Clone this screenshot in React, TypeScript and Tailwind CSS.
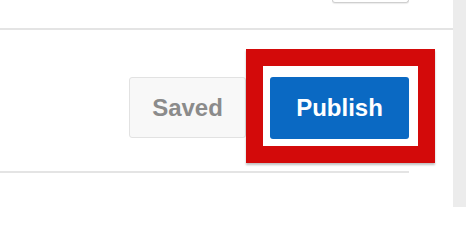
const App: React.FC = () => {
  return (
    <div
      className="relative flex w-[466px] h-[207px] bg-white overflow-hidden"
      style={{ fontFamily: '"Liberation Sans", Arial, sans-serif' }}
    >
      <div className="flex flex-col w-[453px]">
        {/* bottom edge of a control that sits above the crop */}
        <div className="h-[28px] pl-[332px]">
          <div className="w-[77px] h-[3px] border-x border-b border-[#cfcfcf] rounded-b-[3px] shadow-[0_1px_1px_rgba(0,0,0,0.08)]" />
        </div>
        <div className="h-[2px] bg-[#e4e4e4]" />

        <div className="w-[409px] flex flex-col">
          <div className="h-[47px]" />
          <div className="flex justify-end items-start gap-[24px]">
            <button
              type="button"
              className="w-[117px] h-[61px] rounded-[3px] border border-[#e2e2e2] bg-[#f8f8f8] text-[24px] font-bold text-[#8b8b8b]"
            >
              Saved
            </button>
            <button
              type="button"
              className="w-[139px] h-[62px] rounded-[3px] bg-[#0a69c3] text-[24px] font-bold text-white"
            >
              Publish
            </button>
          </div>
          <div className="h-[32px]" />
          <div className="h-[2px] bg-[#e4e4e4]" />
        </div>
      </div>

      <div className="w-[13px] bg-[#ececec]" />

      {/* annotation highlight */}
      <div className="absolute left-[246px] top-[49px] w-[189px] h-[114px] border-[17px] border-[#d30a0a] shadow-[0_2px_2px_rgba(0,0,0,0.25)] pointer-events-none" />
    </div>
  );
};

export default App;
